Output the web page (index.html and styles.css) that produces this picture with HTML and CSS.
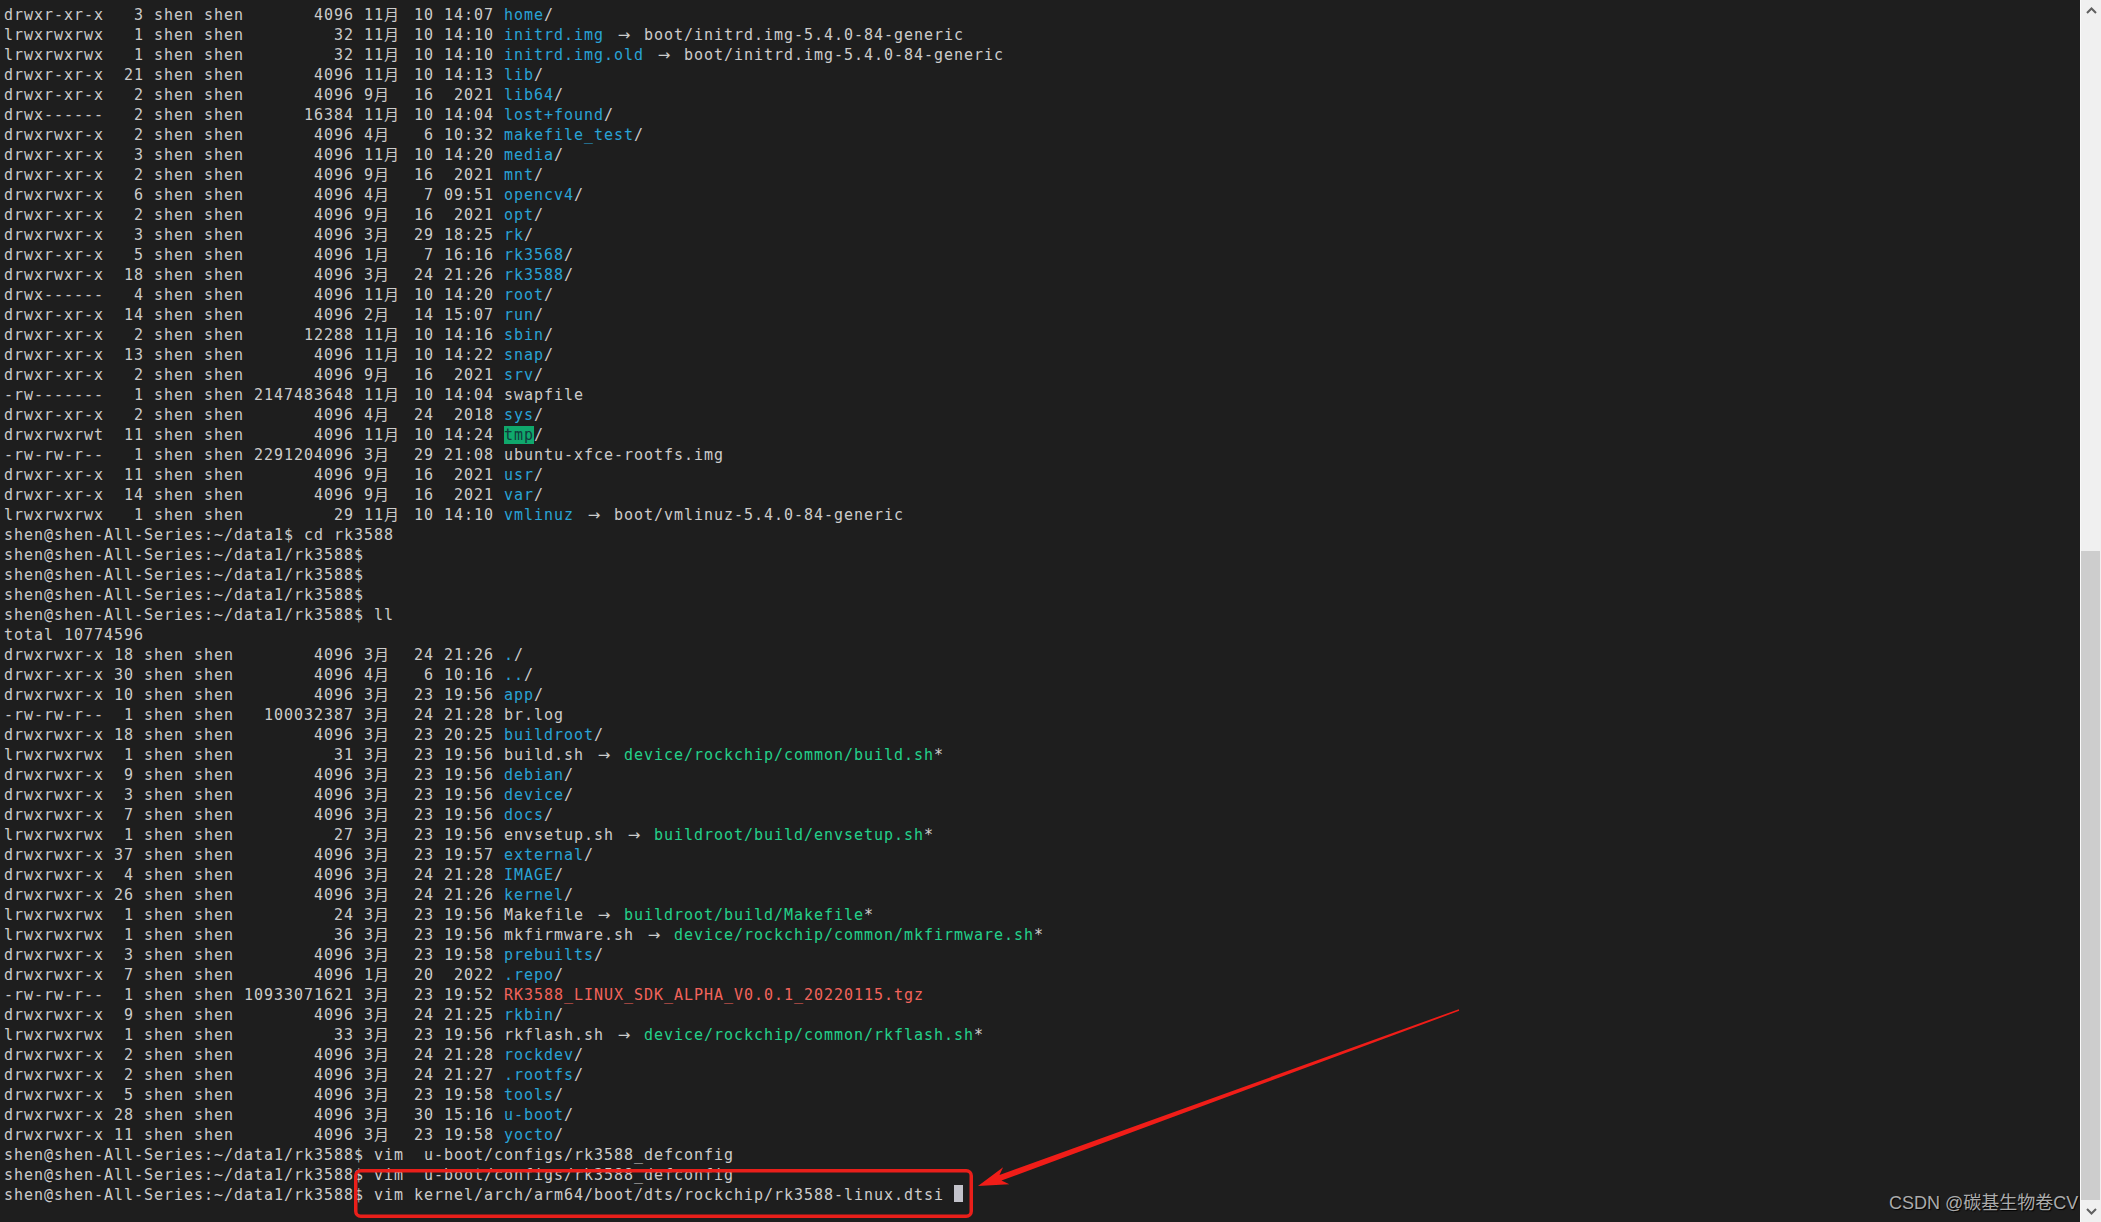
FILE: index.html
```html
<!DOCTYPE html>
<html lang="zh-CN">
<head>
    <meta charset="UTF-8">
    <title>shen@shen-All-Series: ~/data1/rk3588</title>
    <link rel="stylesheet" href="styles.css">
</head>
<body>
    <div class="window">
        <!-- Terminal output -->
        <div class="term">
<pre class="out">drwxr-xr-x   3 shen shen       4096 11<span class="w">月</span> 10 14:07 <span class="d">home</span>/
lrwxrwxrwx   1 shen shen         32 11<span class="w">月</span> 10 14:10 <span class="d">initrd.img</span> <span class="arw">→</span> boot/initrd.img-5.4.0-84-generic
lrwxrwxrwx   1 shen shen         32 11<span class="w">月</span> 10 14:10 <span class="d">initrd.img.old</span> <span class="arw">→</span> boot/initrd.img-5.4.0-84-generic
drwxr-xr-x  21 shen shen       4096 11<span class="w">月</span> 10 14:13 <span class="d">lib</span>/
drwxr-xr-x   2 shen shen       4096 9<span class="w">月</span>  16  2021 <span class="d">lib64</span>/
drwx------   2 shen shen      16384 11<span class="w">月</span> 10 14:04 <span class="d">lost+found</span>/
drwxrwxr-x   2 shen shen       4096 4<span class="w">月</span>   6 10:32 <span class="d">makefile_test</span>/
drwxr-xr-x   3 shen shen       4096 11<span class="w">月</span> 10 14:20 <span class="d">media</span>/
drwxr-xr-x   2 shen shen       4096 9<span class="w">月</span>  16  2021 <span class="d">mnt</span>/
drwxrwxr-x   6 shen shen       4096 4<span class="w">月</span>   7 09:51 <span class="d">opencv4</span>/
drwxr-xr-x   2 shen shen       4096 9<span class="w">月</span>  16  2021 <span class="d">opt</span>/
drwxrwxr-x   3 shen shen       4096 3<span class="w">月</span>  29 18:25 <span class="d">rk</span>/
drwxr-xr-x   5 shen shen       4096 1<span class="w">月</span>   7 16:16 <span class="d">rk3568</span>/
drwxrwxr-x  18 shen shen       4096 3<span class="w">月</span>  24 21:26 <span class="d">rk3588</span>/
drwx------   4 shen shen       4096 11<span class="w">月</span> 10 14:20 <span class="d">root</span>/
drwxr-xr-x  14 shen shen       4096 2<span class="w">月</span>  14 15:07 <span class="d">run</span>/
drwxr-xr-x   2 shen shen      12288 11<span class="w">月</span> 10 14:16 <span class="d">sbin</span>/
drwxr-xr-x  13 shen shen       4096 11<span class="w">月</span> 10 14:22 <span class="d">snap</span>/
drwxr-xr-x   2 shen shen       4096 9<span class="w">月</span>  16  2021 <span class="d">srv</span>/
-rw-------   1 shen shen 2147483648 11<span class="w">月</span> 10 14:04 swapfile
drwxr-xr-x   2 shen shen       4096 4<span class="w">月</span>  24  2018 <span class="d">sys</span>/
drwxrwxrwt  11 shen shen       4096 11<span class="w">月</span> 10 14:24 <span class="t">tmp</span>/
-rw-rw-r--   1 shen shen 2291204096 3<span class="w">月</span>  29 21:08 ubuntu-xfce-rootfs.img
drwxr-xr-x  11 shen shen       4096 9<span class="w">月</span>  16  2021 <span class="d">usr</span>/
drwxr-xr-x  14 shen shen       4096 9<span class="w">月</span>  16  2021 <span class="d">var</span>/
lrwxrwxrwx   1 shen shen         29 11<span class="w">月</span> 10 14:10 <span class="d">vmlinuz</span> <span class="arw">→</span> boot/vmlinuz-5.4.0-84-generic
shen@shen-All-Series:~/data1$ cd rk3588
shen@shen-All-Series:~/data1/rk3588$
shen@shen-All-Series:~/data1/rk3588$
shen@shen-All-Series:~/data1/rk3588$
shen@shen-All-Series:~/data1/rk3588$ ll
total 10774596
drwxrwxr-x 18 shen shen        4096 3<span class="w">月</span>  24 21:26 <span class="d">.</span>/
drwxr-xr-x 30 shen shen        4096 4<span class="w">月</span>   6 10:16 <span class="d">..</span>/
drwxrwxr-x 10 shen shen        4096 3<span class="w">月</span>  23 19:56 <span class="d">app</span>/
-rw-rw-r--  1 shen shen   100032387 3<span class="w">月</span>  24 21:28 br.log
drwxrwxr-x 18 shen shen        4096 3<span class="w">月</span>  23 20:25 <span class="d">buildroot</span>/
lrwxrwxrwx  1 shen shen          31 3<span class="w">月</span>  23 19:56 build.sh <span class="arw">→</span> <span class="x">device/rockchip/common/build.sh</span>*
drwxrwxr-x  9 shen shen        4096 3<span class="w">月</span>  23 19:56 <span class="d">debian</span>/
drwxrwxr-x  3 shen shen        4096 3<span class="w">月</span>  23 19:56 <span class="d">device</span>/
drwxrwxr-x  7 shen shen        4096 3<span class="w">月</span>  23 19:56 <span class="d">docs</span>/
lrwxrwxrwx  1 shen shen          27 3<span class="w">月</span>  23 19:56 envsetup.sh <span class="arw">→</span> <span class="x">buildroot/build/envsetup.sh</span>*
drwxrwxr-x 37 shen shen        4096 3<span class="w">月</span>  23 19:57 <span class="d">external</span>/
drwxrwxr-x  4 shen shen        4096 3<span class="w">月</span>  24 21:28 <span class="d">IMAGE</span>/
drwxrwxr-x 26 shen shen        4096 3<span class="w">月</span>  24 21:26 <span class="d">kernel</span>/
lrwxrwxrwx  1 shen shen          24 3<span class="w">月</span>  23 19:56 Makefile <span class="arw">→</span> <span class="x">buildroot/build/Makefile</span>*
lrwxrwxrwx  1 shen shen          36 3<span class="w">月</span>  23 19:56 mkfirmware.sh <span class="arw">→</span> <span class="x">device/rockchip/common/mkfirmware.sh</span>*
drwxrwxr-x  3 shen shen        4096 3<span class="w">月</span>  23 19:58 <span class="d">prebuilts</span>/
drwxrwxr-x  7 shen shen        4096 1<span class="w">月</span>  20  2022 <span class="d">.repo</span>/
-rw-rw-r--  1 shen shen 10933071621 3<span class="w">月</span>  23 19:52 <span class="r">RK3588_LINUX_SDK_ALPHA_V0.0.1_20220115.tgz</span>
drwxrwxr-x  9 shen shen        4096 3<span class="w">月</span>  24 21:25 <span class="d">rkbin</span>/
lrwxrwxrwx  1 shen shen          33 3<span class="w">月</span>  23 19:56 rkflash.sh <span class="arw">→</span> <span class="x">device/rockchip/common/rkflash.sh</span>*
drwxrwxr-x  2 shen shen        4096 3<span class="w">月</span>  24 21:28 <span class="d">rockdev</span>/
drwxrwxr-x  2 shen shen        4096 3<span class="w">月</span>  24 21:27 <span class="d">.rootfs</span>/
drwxrwxr-x  5 shen shen        4096 3<span class="w">月</span>  23 19:58 <span class="d">tools</span>/
drwxrwxr-x 28 shen shen        4096 3<span class="w">月</span>  30 15:16 <span class="d">u-boot</span>/
drwxrwxr-x 11 shen shen        4096 3<span class="w">月</span>  23 19:58 <span class="d">yocto</span>/
shen@shen-All-Series:~/data1/rk3588$ vim  u-boot/configs/rk3588_defconfig
shen@shen-All-Series:~/data1/rk3588$ vim  u-boot/configs/rk3588_defconfig
shen@shen-All-Series:~/data1/rk3588$ vim kernel/arch/arm64/boot/dts/rockchip/rk3588-linux.dtsi <span class="cursor"></span></pre>

            <!-- Annotation drawn over the screenshot -->
            <svg class="mark" width="2080" height="1222" viewBox="0 0 2080 1222">
                <rect x="355.75" y="1170.75" width="615.5" height="45.5" rx="5" fill="none" stroke="#ea1f1a" stroke-width="3.5"/>
                <polygon fill="#f01d18" points="978,1186 1009.3,1184.2 1001.5,1180.6 1459.2,1010.8 1458.8,1009.2 999.5,1175 1003.1,1167.2"/>
            </svg>

            <div class="watermark">CSDN @碳基生物卷CV</div>
        </div>

        <!-- Scrollbar -->
        <div class="scrollbar">
            <div class="sb-btn">
                <svg width="11" height="7" viewBox="0 0 11 7"><path d="M1 6 L5.5 1.5 L10 6" fill="none" stroke="#606060" stroke-width="2"/></svg>
            </div>
            <div class="sb-track">
                <div class="sb-thumb"></div>
            </div>
            <div class="sb-btn">
                <svg width="11" height="7" viewBox="0 0 11 7"><path d="M1 1 L5.5 5.5 L10 1" fill="none" stroke="#606060" stroke-width="2"/></svg>
            </div>
        </div>
    </div>
</body>
</html>
```

FILE: styles.css
```css
/* General */
body {
    margin: 0;
    background-color: #1e1e1e;
    overflow: hidden;
}

.window {
    display: flex;
    height: 1222px;
}

/* Terminal */
.term {
    flex: 1;
    position: relative;
    overflow: hidden;
    background-color: #1e1e1e;
}

.out {
    margin: 0;
    padding: 4.6px 0 0 4px;
    font-family: "DejaVu Sans Mono", "Noto Sans CJK SC", monospace;
    font-size: 15px;
    letter-spacing: 0.969px;
    line-height: 20px;
    color: #cccccc;
    white-space: pre;
}

/* CJK month glyph fills two cells (15px glyph + 5px) */
.w {
    letter-spacing: 5px;
    line-height: 0;
}

/* "->" ligature, two cells wide */
.arw {
    font-family: "DejaVu Sans", sans-serif;
    letter-spacing: 0;
    line-height: 0;
    padding: 0 3.7px;
}

.d {
    color: #29a3d6;
}

.x {
    color: #23d18b;
}

.r {
    color: #f2645c;
}

.t {
    background-color: #10a86c;
    color: #123a3c;
}

.cursor {
    display: inline-block;
    width: 9px;
    height: 17px;
    vertical-align: -2px;
    background-color: #c3c3cb;
}

/* Red highlight + arrow */
.mark {
    position: absolute;
    left: 0;
    top: 0;
    pointer-events: none;
}

.watermark {
    position: absolute;
    left: 1889px;
    top: 1194px;
    font-family: "Liberation Sans", "Noto Sans CJK SC", sans-serif;
    font-size: 18px;
    line-height: 1;
    white-space: nowrap;
    color: #ababab;
    text-shadow: 1px 1px 1px #000;
}

/* Scrollbar */
.scrollbar {
    width: 20px;
    border-left: 1px solid #fafafa;
    background-color: #f0f0f0;
    display: flex;
    flex-direction: column;
}

.sb-btn {
    height: 21px;
    display: flex;
    align-items: center;
    justify-content: center;
}

.sb-track {
    flex: 1;
}

.sb-thumb {
    margin-top: 530px;
    margin-right: 1px;
    height: 649px;
    background-color: #cdcdcd;
}
```
